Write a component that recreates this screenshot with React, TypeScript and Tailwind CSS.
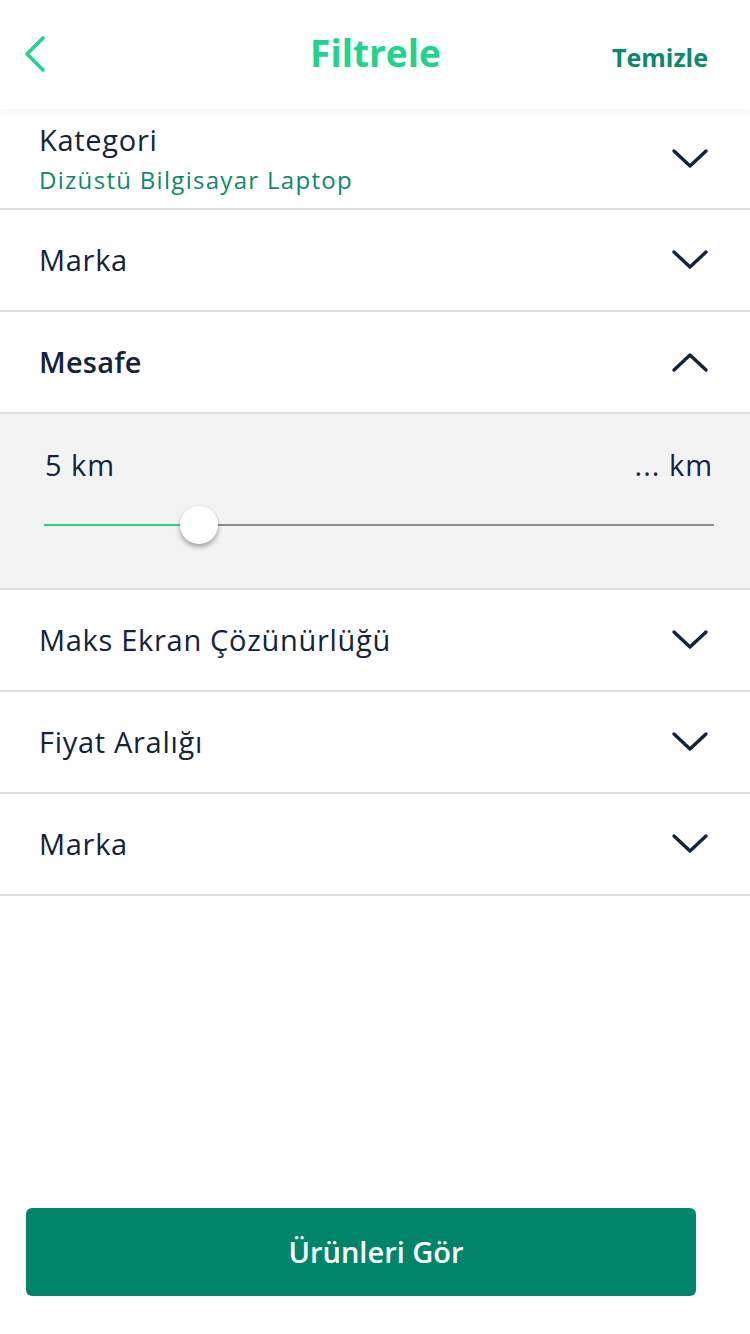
import React from "react";

const font = { fontFamily: "'Open Sans', 'Noto Sans', sans-serif" };

const Chevron: React.FC<{ up?: boolean }> = ({ up }) => (
  <svg width="38" height="22" viewBox="0 0 38 22" fill="none" className="shrink-0">
    <path
      d={up ? "M3 19L19 4L35 19" : "M3 3L19 18L35 3"}
      stroke="#13233b"
      strokeWidth="3.4"
      strokeLinecap="round"
      strokeLinejoin="round"
    />
  </svg>
);

interface RowProps {
  title: string;
  subtitle?: string;
  open?: boolean;
  first?: boolean;
}

const FilterRow: React.FC<RowProps> = ({ title, subtitle, open, first }) => (
  <div
    className={`flex items-center justify-between border-b-2 border-[#dcdfe3] pl-[39px] pr-[41px] ${
      first ? "h-[101px]" : "h-[102px]"
    }`}
  >
    <div className="flex flex-col">
      <span
        className={`text-[29px] leading-[36px] text-[#13233b] ${
          open ? "font-semibold tracking-[0.2px]" : "tracking-[0.7px]"
        }`}
      >
        {title}
      </span>
      {subtitle ? (
        <span className="mt-[7px] text-[24px] leading-[30px] tracking-[1.3px] text-[#0b8a6b]">
          {subtitle}
        </span>
      ) : null}
    </div>
    <Chevron up={open} />
  </div>
);

const DistanceSlider: React.FC = () => (
  <div className="flex h-[176px] flex-col border-b-2 border-[#dcdfe3] bg-[#f3f3f3] pl-[44px] pr-[36px] pt-[33px]">
    <div className="flex justify-between pl-[1px] pr-[1px] text-[29px] leading-[36px] tracking-[1px] text-[#13233b]">
      <span>5 km</span>
      <span>... km</span>
    </div>
    <div className="relative mt-[40px] h-[4px]">
      <div className="absolute left-0 right-0 top-[1px] h-[2px] bg-[#8e8e8e]" />
      <div className="absolute left-0 top-[1px] h-[2px] w-[155px] bg-[#1ed58b]" />
      <div className="absolute left-[136px] top-[-17px] h-[38px] w-[38px] rounded-full bg-white shadow-[0_3px_5px_rgba(0,0,0,0.35)]" />
    </div>
  </div>
);

export default function App() {
  return (
    <div className="flex h-[1334px] w-[750px] flex-col bg-white" style={font}>
      <header className="relative z-10 flex h-[109px] items-center justify-between bg-white pb-[2px] pl-[22px] pr-[42px] shadow-[0_4px_8px_rgba(0,0,0,0.04)]">
        <svg width="26" height="38" viewBox="0 0 26 38" fill="none">
          <path
            d="M21 3L5 19L21 35"
            stroke="#1ed58b"
            strokeWidth="3.6"
            strokeLinecap="round"
            strokeLinejoin="round"
          />
        </svg>
        <h1 className="pointer-events-none absolute left-0 right-0 top-[28px] pl-[1px] text-center text-[37px] font-bold leading-[50px] text-[#1ed58b]">
          Filtrele
        </h1>
        <button className="mt-[8px] text-[25px] font-bold text-[#0b8a6b]">Temizle</button>
      </header>

      <FilterRow title="Kategori" subtitle="Dizüstü Bilgisayar Laptop" first />
      <FilterRow title="Marka" />
      <FilterRow title="Mesafe" open />
      <DistanceSlider />
      <FilterRow title="Maks Ekran Çözünürlüğü" />
      <FilterRow title="Fiyat Aralığı" />
      <FilterRow title="Marka" />

      <div className="flex-1" />

      <div className="pb-[38px] pl-[26px] pr-[54px]">
        <button className="flex h-[88px] w-full items-center justify-center rounded-[6px] bg-[#00856a] pl-[30px] text-[29px] font-semibold text-white">
          Ürünleri Gör
        </button>
      </div>
    </div>
  );
}
